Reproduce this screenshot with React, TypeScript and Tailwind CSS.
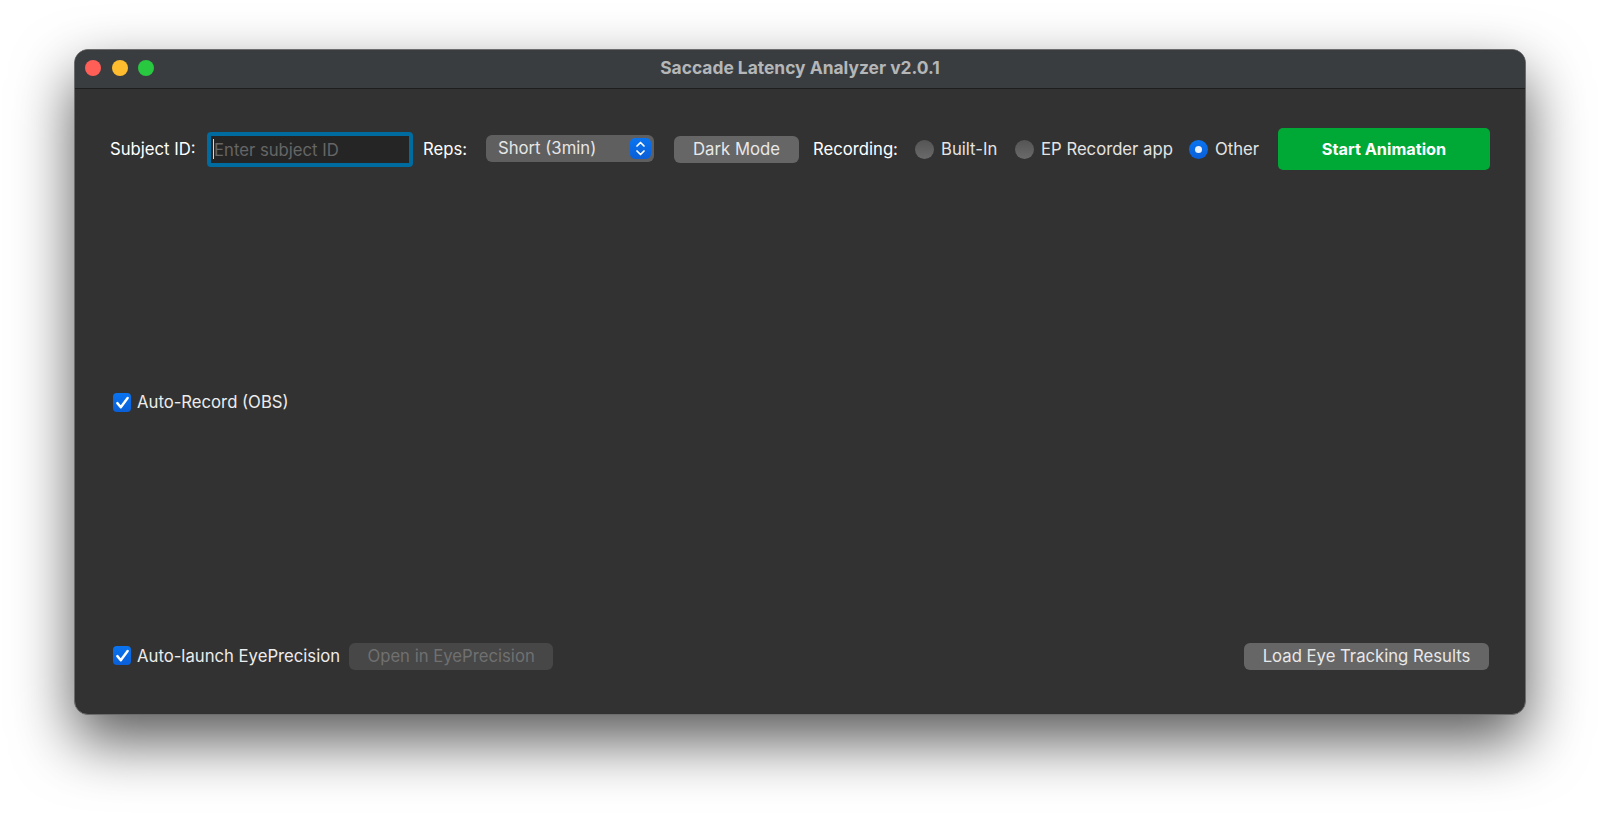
const font = "font-['Inter','Liberation_Sans',sans-serif]";

function Check({ label }: { label: string }) {
  return (
    <label className="flex items-center gap-[6px] text-[16.7px] leading-5 text-[#ececec]">
      <span className="flex h-[19px] w-[18px] items-center justify-center rounded-[4px] bg-gradient-to-b from-[#0a74f0] to-[#0a5fd8]">
        <svg width="15" height="15" viewBox="0 0 14 14" fill="none">
          <path d="M2.2 7.6 5.4 11.4 11.8 2.8" stroke="white" strokeWidth="2.3" strokeLinecap="round" strokeLinejoin="round" />
        </svg>
      </span>
      {label}
    </label>
  );
}

function Radio({ label, width, selected }: { label: string; width: string; selected?: boolean }) {
  return (
    <label className={`flex items-center gap-[7px] text-[#e4e4e4] ${width}`}>
      {selected ? (
        <span className="flex h-[19px] w-[19px] items-center justify-center rounded-full bg-gradient-to-b from-[#0a74f0] to-[#0a5fd8]">
          <span className="h-[7px] w-[7px] rounded-full bg-[#e6f0ff]" />
        </span>
      ) : (
        <span className="h-[19px] w-[19px] rounded-full bg-gradient-to-b from-[#555555] to-[#6a6a6a]" />
      )}
      {label}
    </label>
  );
}

export default function App() {
  return (
    <div className={`h-[813px] w-full overflow-hidden bg-white pl-[74px] pt-[49px] text-[16.7px] ${font}`}>
      <div className="flex h-[666px] w-[1452px] flex-col overflow-hidden rounded-[14px] border border-[#6c6c6c] bg-[#323232] shadow-[0_26px_60px_rgba(0,0,0,0.65)]">
        {/* title bar */}
        <div className="relative flex h-[39px] shrink-0 items-center justify-center border-b border-[#1e1e1e] bg-[#3a3d40]">
          <div className="absolute left-[10px] top-[10px] flex gap-[10.5px]">
            <span className="h-4 w-4 rounded-full bg-[#ff5f57]" />
            <span className="h-4 w-4 rounded-full bg-[#febc2e]" />
            <span className="h-4 w-4 rounded-full bg-[#28c840]" />
          </div>
          <span className="mb-[2px] text-[17.4px] font-bold text-[#b4b6b8]">Saccade Latency Analyzer v2.0.1</span>
        </div>

        <div className="flex flex-1 flex-col pb-[44px] pl-[35px] pr-[35px] pt-[40px]">
          {/* controls */}
          <div className="flex h-[41px] items-center">
            <span className="w-[97px] text-white">Subject ID:</span>
            <div className="relative h-[35px] w-[206px] rounded-[4px] border-[4px] border-[#006b9f] bg-[#252525]">
              <input
                placeholder="Enter subject ID"
                className="h-full w-full bg-transparent pl-[3px] text-[16.7px] outline-none placeholder:text-[#666666]"
              />
              <span className="absolute left-[2px] top-[3px] h-[20px] w-px bg-[#d8d8d8]" />
            </div>
            <span className="ml-[10px] w-[63px] text-white">Reps:</span>
            <div className="mb-[2px] flex h-[27px] w-[168px] items-center justify-between rounded-[6px] bg-[#5f5f5f] pl-3 pr-[3px] text-[#e6e6e6]">
              Short (3min)
              <span className="flex h-[21px] w-[21px] items-center justify-center rounded-[5px] bg-gradient-to-b from-[#0a74f0] to-[#0a5fd8]">
                <svg width="11" height="17" viewBox="0 0 11 17" fill="none" stroke="white" strokeWidth="1.7" strokeLinecap="round" strokeLinejoin="round">
                  <path d="M2 6 5.5 2.5 9 6" />
                  <path d="M2 11 5.5 14.5 9 11" />
                </svg>
              </span>
            </div>
            <button className="ml-5 h-[27px] w-[125px] rounded-[6px] bg-[#666666] text-[#e8e8e8]">Dark Mode</button>
            <span className="ml-[14px] w-[102px] text-white">Recording:</span>
            <Radio label="Built-In" width="w-[100px]" />
            <Radio label="EP Recorder app" width="w-[174px]" />
            <Radio label="Other" width="w-[89px]" selected />
            <button className="mb-px h-[42px] w-[212px] rounded-[5px] bg-[#00a936] text-[16.3px] font-bold text-white">Start Animation</button>
          </div>

          <div className="ml-[3px] mt-[222px]">
            <Check label="Auto-Record (OBS)" />
          </div>

          {/* bottom actions */}
          <div className="mt-auto flex items-center justify-between">
            <div className="ml-[3px] flex items-center">
              <div className="mb-[2px]">
                <Check label="Auto-launch EyePrecision" />
              </div>
              <button className="ml-[9px] h-[27px] w-[204px] rounded-[6px] bg-[#474747] text-[#707070]">Open in EyePrecision</button>
            </div>
            <button className="mr-px h-[27px] w-[245px] rounded-[6px] bg-[#666666] text-[#e8e8e8]">Load Eye Tracking Results</button>
          </div>
        </div>
      </div>
    </div>
  );
}
